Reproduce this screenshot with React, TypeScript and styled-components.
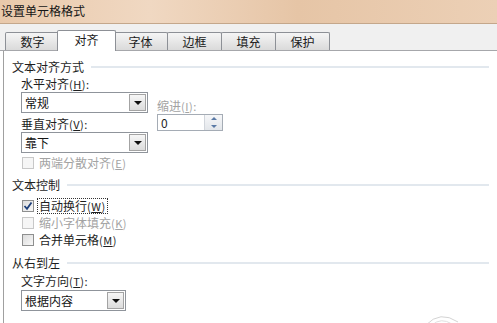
import styled, { createGlobalStyle } from "styled-components"

const GlobalStyle = createGlobalStyle`
  html, body {
    margin: 0;
    padding: 0;
    background: #fff;
  }
  body {
    font-family: "Noto Sans CJK SC", "Noto Sans", sans-serif;
    font-size: 12px;
    color: #1e1e1e;
  }
  #root {
    width: 497px;
    height: 323px;
    overflow: hidden;
  }
`

const tabs = ["数字", "对齐", "字体", "边框", "填充", "保护"]

const Dialog = styled.div`
  position: relative;
  display: flex;
  flex-direction: column;
  width: 497px;
  height: 323px;
  overflow: hidden;
`

const TitleBar = styled.div`
  height: 24px;
  box-sizing: border-box;
  border-bottom: 1px solid #c4a78b;
  background: linear-gradient(to right, #e9c9ab 0%, #f0d8c2 30%, #e6c5a6 60%, #ecd0b6 100%);
  line-height: 22px;
  font-size: 12px;
  color: #151515;
  padding-left: 1px;
`

const TabStrip = styled.div`
  display: flex;
  align-items: flex-end;
  height: 27px;
  box-sizing: border-box;
  padding-left: 5px;
  background: #f0f0f0;
  border-bottom: 1px solid #a6a7ab;
`

const Tab = styled.div<{ $active?: boolean }>`
  position: relative;
  box-sizing: border-box;
  width: ${(p) => (p.$active ? 59 : 55)}px;
  height: ${(p) => (p.$active ? 21 : 18)}px;
  margin-left: ${(p) => (p.$active ? -3 : -1)}px;
  margin-right: ${(p) => (p.$active ? -2 : 0)}px;
  margin-bottom: ${(p) => (p.$active ? -1 : 0)}px;
  border: 1px solid #8d9096;
  border-bottom: none;
  border-radius: 2px 2px 0 0;
  background: ${(p) => (p.$active ? "#fff" : "linear-gradient(#f5f5f5, #dadada)")};
  z-index: ${(p) => (p.$active ? 1 : 0)};
  text-align: center;
  line-height: ${(p) => (p.$active ? 18 : 17)}px;
  color: #1a1a1a;
  &:first-child {
    margin-left: 0;
  }
`

const Panel = styled.div`
  flex: 1;
  display: flex;
  flex-direction: column;
  margin-left: 3px;
  padding: 8px 8px 0 8px;
  border-left: 1px solid #a0a0a0;
  background: #fff;
`

const SectionHeader = styled.div<{ $gap?: number }>`
  display: flex;
  align-items: center;
  gap: 7px;
  height: 16px;
  line-height: 16px;
  margin-top: ${(p) => p.$gap ?? 0}px;
  color: #1e1e1e;
`

const HeaderLine = styled.div`
  flex: 1;
  height: 2px;
  background: #e2e8ee;
`

const SectionBody = styled.div`
  display: flex;
  flex-direction: column;
  padding-left: 9px;
`

const AlignRow = styled.div`
  display: flex;
  gap: 9px;
  margin-top: 1px;
`

const Column = styled.div<{ $top?: number }>`
  display: flex;
  flex-direction: column;
  padding-top: ${(p) => p.$top ?? 0}px;
`

const FieldLabel = styled.div<{ $gap?: number; $disabled?: boolean }>`
  height: 16px;
  line-height: 16px;
  margin-top: ${(p) => p.$gap ?? 0}px;
  color: ${(p) => (p.$disabled ? "#a3a3a3" : "#1e1e1e")};
  white-space: nowrap;
`

const Key = styled.span`
  font-size: 11px;
  letter-spacing: 0.5px;
  & u {
    text-underline-offset: 1px;
  }
`

const SelectBox = styled.div<{ $width: number; $gap?: number }>`
  display: flex;
  align-items: stretch;
  justify-content: space-between;
  box-sizing: border-box;
  width: ${(p) => p.$width}px;
  height: 21px;
  margin-top: ${(p) => p.$gap ?? 0}px;
  padding: 1px;
  border: 1px solid #8f949b;
  background: #fff;
`

const SelectText = styled.span`
  padding-left: 2px;
  line-height: 17px;
  color: #141414;
`

const SelectButton = styled.div`
  display: flex;
  align-items: center;
  justify-content: center;
  box-sizing: border-box;
  width: 17px;
  border: 1px solid #a3a3a3;
  background: linear-gradient(#f6f6f6, #dcdcdc);
  &::after {
    content: "";
    border-left: 4px solid transparent;
    border-right: 4px solid transparent;
    border-top: 4px solid #101010;
  }
`

const Spinner = styled.div`
  display: flex;
  justify-content: space-between;
  box-sizing: border-box;
  width: 66px;
  height: 17px;
  border: 1px solid #a5acb5;
  background: #fff;
`

const SpinValue = styled.span`
  padding-left: 3px;
  line-height: 15px;
`

const SpinButtons = styled.div`
  display: flex;
  flex-direction: column;
  width: 17px;
  border-left: 1px solid #d2d6dc;
  background: linear-gradient(#f6f7f9, #e3e6ea);
`

const SpinArrow = styled.div<{ $up?: boolean }>`
  flex: 1;
  display: flex;
  align-items: center;
  justify-content: center;
  &::after {
    content: "";
    border-left: 3px solid transparent;
    border-right: 3px solid transparent;
    ${(p) => (p.$up ? "border-bottom: 3px solid #5b7aa6;" : "border-top: 3px solid #5b7aa6;")}
  }
`

const CheckRow = styled.div<{ $gap?: number; $disabled?: boolean }>`
  display: flex;
  align-items: center;
  gap: 3px;
  height: 17px;
  margin-top: ${(p) => p.$gap ?? 0}px;
  margin-left: 1px;
  color: ${(p) => (p.$disabled ? "#a3a3a3" : "#1e1e1e")};
  white-space: nowrap;
`

const Box = styled.div<{ $disabled?: boolean }>`
  display: flex;
  align-items: center;
  justify-content: center;
  box-sizing: border-box;
  width: 12px;
  height: 12px;
  border: 1px solid ${(p) => (p.$disabled ? "#c8c8c8" : "#8e8f8f")};
  background: ${(p) => (p.$disabled ? "#f6f6f6" : "linear-gradient(135deg, #dcdcdc, #f8f8f8)")};
`

const FocusLabel = styled.span<{ $focused?: boolean }>`
  padding: 0 1px;
  border: 1px dotted ${(p) => (p.$focused ? "#333" : "transparent")};
  line-height: 13px;
`

const Watermark = styled.svg`
  position: absolute;
  left: 424px;
  top: 312px;
`

const Check = () => (
  <svg width="10" height="10" viewBox="0 0 10 10">
    <path d="M1.5 5 L4 7.8 L8.5 1.5" fill="none" stroke="#1d3f7a" strokeWidth="1.8" />
  </svg>
)

type checkProps = {
  label: string
  hotkey: string
  checked?: boolean
  disabled?: boolean
  focused?: boolean
  gap?: number
}

const CheckItem = (props: checkProps) => {
  return (
    <CheckRow $gap={props.gap} $disabled={props.disabled}>
      <Box $disabled={props.disabled}>{props.checked && <Check />}</Box>
      <FocusLabel $focused={props.focused}>
        {props.label}
        <Key>
          (<u>{props.hotkey}</u>)
        </Key>
      </FocusLabel>
    </CheckRow>
  )
}

type selectProps = {
  value: string
  width: number
  gap?: number
}

const Select = (props: selectProps) => {
  return (
    <SelectBox $width={props.width} $gap={props.gap}>
      <SelectText>{props.value}</SelectText>
      <SelectButton />
    </SelectBox>
  )
}

export default function App() {
  return (
    <>
      <GlobalStyle />
      <Dialog>
        <TitleBar>设置单元格格式</TitleBar>
        <TabStrip>
          {tabs.map((name) => (
            <Tab key={name} $active={name === "对齐"}>
              {name}
            </Tab>
          ))}
        </TabStrip>
        <Panel>
          <SectionHeader>
            文本对齐方式
            <HeaderLine />
          </SectionHeader>
          <SectionBody>
            <AlignRow>
              <Column>
                <FieldLabel>
                  水平对齐<Key>(<u>H</u>):</Key>
                </FieldLabel>
                <Select value="常规" width={127} />
                <FieldLabel $gap={3}>
                  垂直对齐<Key>(<u>V</u>):</Key>
                </FieldLabel>
                <Select value="靠下" width={127} />
              </Column>
              <Column $top={22}>
                <FieldLabel $disabled>
                  缩进<Key>(<u>I</u>):</Key>
                </FieldLabel>
                <Spinner>
                  <SpinValue>0</SpinValue>
                  <SpinButtons>
                    <SpinArrow $up />
                    <SpinArrow />
                  </SpinButtons>
                </Spinner>
              </Column>
            </AlignRow>
            <CheckItem label="两端分散对齐" hotkey="E" disabled gap={1} />
          </SectionBody>

          <SectionHeader $gap={6}>
            文本控制
            <HeaderLine />
          </SectionHeader>
          <SectionBody>
            <CheckItem label="自动换行" hotkey="W" checked focused gap={4} />
            <CheckItem label="缩小字体填充" hotkey="K" disabled />
            <CheckItem label="合并单元格" hotkey="M" />
          </SectionBody>

          <SectionHeader $gap={7}>
            从右到左
            <HeaderLine />
          </SectionHeader>
          <SectionBody>
            <FieldLabel $gap={2}>
              文字方向<Key>(<u>T</u>):</Key>
            </FieldLabel>
            <Select value="根据内容" width={105} gap={1} />
          </SectionBody>
        </Panel>
        <Watermark width="40" height="14" viewBox="0 0 40 14">
          <path d="M2 13 Q16 -2 34 10" fill="none" stroke="#d4d4d4" strokeWidth="1" />
          <path d="M8 13 Q17 5 28 12" fill="none" stroke="#e0e0e0" strokeWidth="1" />
        </Watermark>
      </Dialog>
    </>
  )
}
